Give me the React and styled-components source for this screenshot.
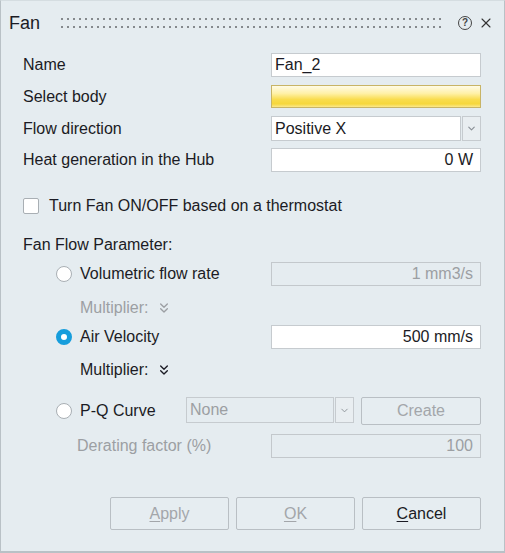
import React from 'react'
import styled, { createGlobalStyle } from 'styled-components'
import { ChevronsDown, ChevronDown, X } from 'lucide-react'

const Global = createGlobalStyle`
  html, body { margin: 0; padding: 0; background: #ffffff; }
  * { box-sizing: border-box; }
`

const Window = styled.div`
  width: 505px;
  height: 553px;
  background: #e5ecf0;
  border: 1px solid #b9c1c6;
  border-top-color: #d5dde1;
  border-bottom-width: 2px;
  font-family: "Liberation Sans", Arial, sans-serif;
  font-size: 16px;
  color: #1b1b24;
  display: flex;
  flex-direction: column;
`

const TitleBar = styled.div`
  height: 44px;
  display: flex;
  align-items: center;
  padding: 0 10px 0 8px;
`

const Title = styled.div`
  font-size: 18px;
  width: 50px;
`

const Grip = styled.div`
  flex: 1;
  height: 16px;
  margin-right: 14px;
  background-image: radial-gradient(circle, #85898d 1.1px, transparent 1.5px);
  background-size: 6px 8px;
  background-position: 0 0;
`

const HelpIcon = styled.div`
  width: 14px;
  height: 14px;
  border: 1.5px solid #444;
  border-radius: 50%;
  font-size: 10px;
  font-weight: bold;
  line-height: 11px;
  text-align: center;
  color: #444;
  margin-right: 6px;
`

const Body = styled.div`
  flex: 1;
  display: flex;
  flex-direction: column;
  padding: 8px 23px 0 22px;
`

const Row = styled.div`
  display: flex;
  align-items: center;
  justify-content: space-between;
  height: ${p => p.h || 24}px;
  margin-top: ${p => p.mt || 0}px;
  padding-left: ${p => p.indent || 0}px;
  color: ${p => (p.disabled ? '#9c9fa3' : 'inherit')};
`

const Label = styled.span`
  display: flex;
  align-items: center;
  gap: ${p => p.gap || 8}px;
`

const Field = styled.div`
  width: 210px;
  height: ${p => p.h || 24}px;
  background: ${p => (p.disabled ? '#e5ecf0' : '#ffffff')};
  border: 1px solid ${p => (p.disabled ? '#c3c8cc' : '#c6cbcf')};
  color: ${p => (p.disabled ? '#9c9fa3' : '#1b1b24')};
  display: flex;
  align-items: center;
  justify-content: ${p => (p.right ? 'flex-end' : 'flex-start')};
  padding: 0 7px 0 3px;
  font-size: 16px;
`

const PickField = styled.div`
  width: 210px;
  height: 23px;
  border: 1px solid #c8b466;
  background: linear-gradient(#fffbe6 0%, #fff1a8 35%, #f9dc4c 65%, #f6d73c 85%, #fbe88c 100%);
`

const SelectWrap = styled.div`
  width: ${p => p.w || 210}px;
  height: ${p => p.h || 25}px;
  display: flex;
  gap: 1px;
`

const SelectBox = styled.div`
  flex: 1;
  background: ${p => (p.disabled ? '#e5ecf0' : '#ffffff')};
  border: 1px solid #c6cbcf;
  color: ${p => (p.disabled ? '#9c9fa3' : '#1b1b24')};
  display: flex;
  align-items: center;
  padding-left: 3px;
  font-size: 16px;
`

const ArrowBtn = styled.div`
  width: 19px;
  border: 1px solid #c6cbcf;
  background: #e9eef1;
  display: flex;
  align-items: center;
  justify-content: center;
  color: #8a9096;
`

const Check = styled.span`
  width: 16px;
  height: 16px;
  border: 1px solid #a9afb4;
  border-radius: 2px;
  background: #ffffff;
`

const Radio = styled.span`
  width: 16px;
  height: 16px;
  border-radius: 50%;
  border: ${p => (p.on ? '5px solid #169ddc' : '1px solid #a9afb4')};
  background: #ffffff;
`

const Multiplier = styled.div`
  display: flex;
  align-items: center;
  gap: 8px;
  height: 20px;
  margin-top: ${p => p.mt || 0}px;
  padding-left: 57px;
  color: ${p => (p.disabled ? '#9c9fa3' : '#1b1b24')};
`

const Button = styled.div`
  width: ${p => p.w || 119}px;
  height: ${p => p.h || 33}px;
  border: 1px solid #b9bfc4;
  border-radius: 2px;
  background: #e6edf1;
  display: flex;
  align-items: center;
  justify-content: center;
  font-size: 16px;
  color: ${p => (p.disabled ? '#a3a6aa' : '#1b1b24')};
  u { text-decoration: underline; text-underline-offset: 2px; }
`

const Footer = styled.div`
  display: flex;
  justify-content: flex-end;
  gap: 7px;
  margin-top: 39px;
`

const Group = styled.div`
  display: flex;
  gap: 7px;
`

export default function App() {
  return (
    <>
      <Global />
      <Window>
        <TitleBar>
          <Title>Fan</Title>
          <Grip />
          <HelpIcon>?</HelpIcon>
          <X size={16} strokeWidth={1.6} color="#333" />
        </TitleBar>
        <Body>
          <Row h={24}>
            <span>Name</span>
            <Field>Fan_2</Field>
          </Row>
          <Row h={23} mt={8}>
            <span>Select body</span>
            <PickField />
          </Row>
          <Row h={25} mt={8}>
            <span>Flow direction</span>
            <SelectWrap>
              <SelectBox>Positive X</SelectBox>
              <ArrowBtn><ChevronDown size={11} strokeWidth={2.5} /></ArrowBtn>
            </SelectWrap>
          </Row>
          <Row h={24} mt={7}>
            <span>Heat generation in the Hub</span>
            <Field right>0 W</Field>
          </Row>
          <Row h={24} mt={22}>
            <Label gap={10}><Check />Turn Fan ON/OFF based on a thermostat</Label>
          </Row>
          <Row h={24} mt={15}>
            <span>Fan Flow Parameter:</span>
          </Row>
          <Row h={24} mt={5} indent={33}>
            <Label><Radio />Volumetric flow rate</Label>
            <Field right disabled>1 mm3/s</Field>
          </Row>
          <Multiplier disabled mt={12}>Multiplier: <ChevronsDown size={16} strokeWidth={2} /></Multiplier>
          <Row h={24} mt={7} indent={33}>
            <Label><Radio on />Air Velocity</Label>
            <Field right>500 mm/s</Field>
          </Row>
          <Multiplier mt={11}>Multiplier: <ChevronsDown size={16} strokeWidth={2} /></Multiplier>
          <Row h={28} mt={17} indent={33}>
            <Label><Radio />P-Q Curve</Label>
            <Group>
              <SelectWrap w={168} h={26}>
                <SelectBox disabled>None</SelectBox>
                <ArrowBtn><ChevronDown size={11} strokeWidth={2} /></ArrowBtn>
              </SelectWrap>
              <Button disabled w={120} h={28}>Create</Button>
            </Group>
          </Row>
          <Row h={24} mt={9} indent={54} disabled>
            <span>Derating factor (%)</span>
            <Field right disabled>100</Field>
          </Row>
          <Footer>
            <Button disabled><u>A</u>pply</Button>
            <Button disabled><u>O</u>K</Button>
            <Button><u>C</u>ancel</Button>
          </Footer>
        </Body>
      </Window>
    </>
  )
}
